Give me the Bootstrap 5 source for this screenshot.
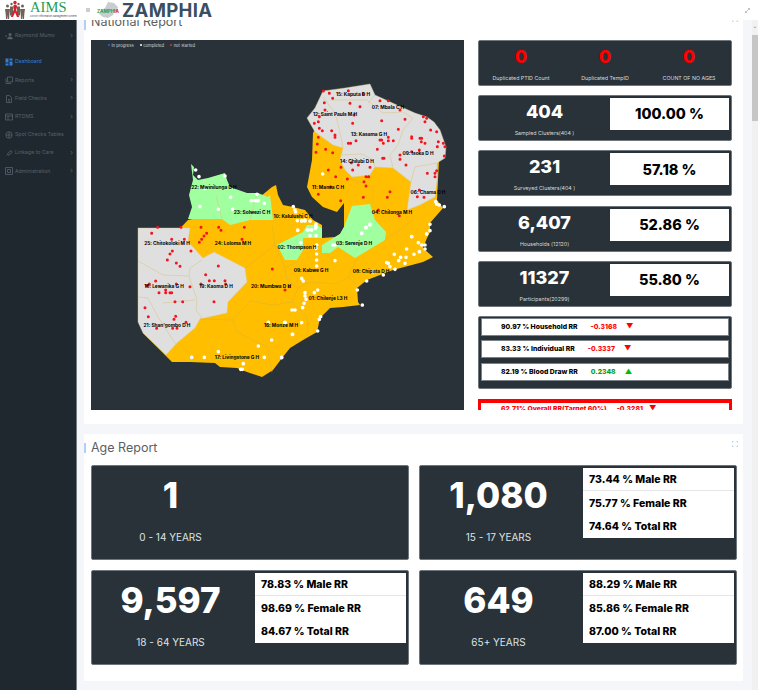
<!DOCTYPE html>
<html lang="en">

<head>
    <meta charset="UTF-8">
    <meta name="viewport" content="width=device-width, initial-scale=1.0">
    <title>ZAMPHIA - Dashboard</title>
    <link href="https://cdn.jsdelivr.net/npm/bootstrap@5.3.0/dist/css/bootstrap.min.css" rel="stylesheet">
    <style>
        html, body { height: 690px; overflow: hidden; }
        body { font-family: Inter, "Liberation Sans", sans-serif; background: #f4f6f9; color: #000; }

        /* top bar */
        .top-bar { height: 20px; background: #fff; position: relative; z-index: 2; }
        .aims-block { width: 44px; flex: none; }
        .aims-word { font-family: "Liberation Serif", serif; font-size: 14.5px; line-height: 13px; color: #1f9d55; letter-spacing: .1px; }
        .aims-sub { font-size: 2.4px; line-height: 4px; margin-top: 1px; color: #444; white-space: nowrap; }
        .burger { width: 4px; height: 4px; background: #c9ced3; margin-left: 12px; margin-right: 6px; flex: none; }
        .zam-logo { width: 24px; height: 18px; flex: none; }
        .zam-title { font-size: 18.5px; line-height: 20px; font-weight: 700; color: #3a4f5f; margin-left: 2px; letter-spacing: .3px; }

        /* side menu */
        .page-body { height: 670px; }
        .side-menu { width: 77px; flex: none; background: #20282f; border-right: 1px solid #737b85; padding-top: 7px; }
        .menu-item { height: 18.2px; padding-left: 5px; padding-right: 3px; font-size: 5.2px; color: #56616c; white-space: nowrap; }
        .menu-item svg { width: 8px; height: 8px; margin-right: 2px; flex: none; }
        .menu-item.is-first { margin-bottom: 8px; }
        .menu-item.is-active { color: #2f7fd8; }
        .menu-caret { margin-left: auto; font-size: 7px; }

        /* cards */
        .main-area { width: 675px; flex: none; padding: 0 9px 0 7px; overflow: hidden; }
        .report-card { background: #fff; padding-left: 7px; padding-right: 6px; position: relative; }
        .report-first { margin-top: -10px; height: 414px; padding-top: 5px; margin-bottom: 10px; }
        .report-second { height: 247px; padding-top: 7px; }
        .report-title { font-size: 12.5px; line-height: 14px; color: #5a5f63; font-weight: 400; margin: 0 0 11px; }
        .report-second .report-title { margin-bottom: 10px; }
        .title-mark { position: absolute; left: 0; width: 2px; height: 10px; background: #b3cff5; }
        .expand-icon { position: absolute; right: 5px; width: 6px; height: 6px; }

        .map-panel { width: 373px; height: 370px; flex: none; background: #283238; position: relative; }
        .map-panel svg { display: block; width: 373px; height: 370px; }
        .map-legend { position: absolute; left: 17px; top: 3px; font-size: 4.2px; color: #cfd4d8; }
        .map-legend i { display: inline-block; width: 2px; height: 2px; border-radius: 50%; margin-right: 1.500px; vertical-align: 1px; }
        .map-legend span { margin-right: 6px; }
        .map-name { font-family: Inter, sans-serif; font-size: 4.8px; font-weight: 700; fill: #000; text-anchor: middle; }
        .map-border { fill: none; stroke: #d8c88e; stroke-width: .6; }
        .map-border-soft { fill: none; stroke: #e3b12c; stroke-width: .6; }
        .red-dots { fill: none; stroke: #f5141e; stroke-width: 9; stroke-linecap: round; }
        .white-dots { fill: none; stroke: #fff; stroke-width: 11; stroke-linecap: round; }

        .stat-col { width: 254px; height: 370px; margin-left: 14px; overflow: hidden; flex: none; }
        .stat-box { background: #283238; border: 1px solid #6d767c; border-radius: 2px; color: #fff; }
        .stat-small { height: 46px; margin-bottom: 9.2px; }
        .stat-head { font-size: 18px; line-height: 24px; font-weight: 800; padding-top: 4px; }
        .stat-label { font-size: 5.3px; line-height: 8px; margin-top: 5px; color: #d7dbde; white-space: nowrap; }
        .stat-red { color: #f00; }
        .stat-pct { width: 119px; height: 32px; margin: 2px 2px 0 0; background: #fff; color: #000; font-size: 14.5px; font-weight: 800; flex: none; }
        .rr-box { height: 73px; margin-bottom: 10px; padding: 1px 2px; }
        .rr-line { height: 18px; background: #fff; border: 1px solid #7a8288; margin-bottom: 4.5px; padding-left: 19px; font-size: 6.8px; font-weight: 800; color: #000; gap: 13px; white-space: nowrap; }
        .rr-down { color: #f00; }
        .rr-up { color: #0a9a0a; }
        .rr-arrow { font-size: 7px; margin-left: -4px; }
        .rr-arrow.rr-up { color: #00c000; }
        .rr-alert { border: 3px solid #f00; border-top-width: 4px; border-bottom: 0; height: 40px; background: #fff; padding: 1.500px 0 0 20px; font-size: 6.8px; font-weight: 800; color: #f00; gap: 10px; white-space: nowrap; }

        .age-grid { display: grid; grid-template-columns: 318px 318px; gap: 10px; }
        .age-box { height: 95px; background: #283238; border: 1px solid #6d767c; border-radius: 2px; color: #fff; }
        .age-side { flex: 1 1 0; min-width: 0; padding-top: 7px; }
        .age-count { font-size: 35px; line-height: 44px; font-weight: 800; }
        .age-label { font-size: 10px; line-height: 14px; margin-top: 13px; color: #dfe2e4; }
        .age-list { width: 151px; height: 70px; margin: 2px 2px 0 6px; background: #fff; color: #000; font-size: 10.5px; font-weight: 800; flex: none; white-space: nowrap; }
        .age-list div { height: 23.3px; padding: 2px 0 0 6px; }
        .age-list div:first-child { border-bottom: 1px solid #e4e6e8; }

        /* fake scrollbar */
        .scroll-track { width: 6px; flex: none; background: #f1f1f1; font-size: 4px; line-height: 15px; color: #555; text-align: center; }
        .scroll-thumb { height: 86px; background: #c6c6c6; }
    </style>
</head>

<body>

    <header class="top-bar d-flex align-items-center">
        <svg width="22" height="20" viewBox="0 0 22 20" class="ms-1 flex-none">
            <g fill="#6f6258">
                <circle cx="3.5" cy="6" r="1.5"/><path d="M1 9h5l-.6 5-.3 5H3.8l-.3-4-.3 4H2l-.3-5z"/>
                <circle cx="18.5" cy="6" r="1.5"/><path d="M16 9h5l-.7 5-.3 5h-1.2l-.3-4-.3 4H17l-.3-5z"/>
                <circle cx="7.5" cy="4" r="1.2"/><circle cx="14.5" cy="4" r="1.2"/>
                <path d="M6 6.500h3v9H6zM13 6.500h3v9h-3z"/>
            </g>
            <circle cx="11" cy="2.500" r="1.700" fill="#d6202a"/>
            <path d="M11 4.500c2 0 2.500 2 1.700 4L9 17H6.800l3-7.400c-.8-1.800-.8-5.100 1.200-5.100zM10.200 10.500l1.400-1.800 3.600 8.300H13z" fill="#d6202a"/>
        </svg>
        <div class="aims-block ms-1">
            <div class="aims-word">AIMS</div>
            <div class="aims-sub">Activity Information Management System</div>
        </div>
        <div class="burger"></div>
        <svg class="zam-logo" viewBox="0 0 24 18">
            <path d="M12 1l6 1 4 4-1 4-3 1-1 3-5 3-5-1-4-3 2-4 4-2z" fill="#c9cdcf"/>
            <text x="1" y="12" font-size="4.600" font-weight="700" fill="#1f9d55" font-family="Inter, sans-serif">ZAMPH<tspan fill="#d6202a">IA</tspan></text>
        </svg>
        <div class="zam-title">ZAMPHIA</div>
        <svg class="ms-auto me-2" width="5" height="5" viewBox="0 0 5 5"><path d="M.5 4.500l4-4M3 .5h1.500V2M.5 3v1.500H2" fill="none" stroke="#9aa0a5" stroke-width=".6"/></svg>
    </header>

    <div class="page-body d-flex">
        <aside class="side-menu">
            <div class="menu-item is-first d-flex align-items-center">
                <svg viewBox="0 0 8 8"><circle cx="5" cy="2.500" r="1.500" fill="#56616c"/><path d="M2.500 7c0-3 5-3 5 0zM0 4h2M1 3v2" fill="#56616c" stroke="#56616c" stroke-width=".5"/></svg>Raymond Mumo<span class="menu-caret">›</span>
            </div>
            <div class="menu-item is-active d-flex align-items-center">
                <svg viewBox="0 0 8 8" fill="#2f7fd8"><path d="M.5.500h3v4h-3zM4.500.500h3v2h-3zM.5 5.500h3v2h-3zM4.500 3.500h3v4h-3z"/></svg>Dashboard
            </div>
            <div class="menu-item d-flex align-items-center">
                <svg viewBox="0 0 8 8" fill="none" stroke="#56616c" stroke-width=".8"><path d="M2.500 1h5v5h-5zM1 2.500V7.500h5"/></svg>Reports<span class="menu-caret">›</span>
            </div>
            <div class="menu-item d-flex align-items-center">
                <svg viewBox="0 0 8 8" fill="none" stroke="#56616c" stroke-width=".8"><path d="M1.500.500h3l2 2v5h-5zM3 4.500h2M3 6h2"/></svg>Field Checks<span class="menu-caret">›</span>
            </div>
            <div class="menu-item d-flex align-items-center">
                <svg viewBox="0 0 8 8" fill="none" stroke="#56616c" stroke-width=".8"><path d="M.5 1h7v6h-7zM.5 3h7M3 3v4"/></svg>RTDMS<span class="menu-caret">›</span>
            </div>
            <div class="menu-item d-flex align-items-center">
                <svg viewBox="0 0 8 8" fill="none" stroke="#56616c" stroke-width=".8"><circle cx="4" cy="4" r="3.200"/><path d="M1 4h6M4 1v6"/></svg>Spot Checks Tables
            </div>
            <div class="menu-item d-flex align-items-center">
                <svg viewBox="0 0 8 8" fill="none" stroke="#56616c" stroke-width=".9"><path d="M1.500 6.500l1-1M3 4.200l2-2c1-1 2.500.4 1.500 1.500l-2 2c-1 1-2.600-.4-1.500-1.500z"/></svg>Linkage to Care<span class="menu-caret">›</span>
            </div>
            <div class="menu-item d-flex align-items-center">
                <svg viewBox="0 0 8 8" fill="none" stroke="#56616c" stroke-width=".8"><path d="M.5.500h7v7h-7zM2.500 2.500h3v3h-3z"/></svg>Administration<span class="menu-caret">›</span>
            </div>
        </aside>

        <main class="main-area">
            <section class="report-card report-first">
                <span class="title-mark" style="top: 10px"></span>
                <svg class="expand-icon" style="top: 6px" viewBox="0 0 6 6"><path d="M0 2V0h2M4 0h2v2M6 4v2H4M2 6H0V4" fill="none" stroke="#9fc1f5" stroke-width=".8"/></svg>
                <h5 class="report-title">National Report</h5>
                <div class="d-flex">
                    <div class="map-panel">
                        <div class="map-legend">
                            <span><i class="bg-primary"></i>in progress</span><span><i class="bg-white"></i>completed</span><span><i class="bg-danger"></i>not started</span>
                        </div>
                        <svg viewBox="91 40 373 370">
                            <!-- country base -->
                            <path fill="#ffbf00" d="M188 220L250 205L272 187L276 185L278 195L283 205L293 207L305 210L313 220L322 225L322 238L335 237L340 234L344 227L344 203L337 212L323 207L312 197L307 187L312 160L313 133L330 100L420 120L440 140L437 200L443 208L430 223L430 232L427 238L423 248L433 257L423 262L393 270L367 280L357 288L358 302L360 305L343 307L330 308L320 318L317 332L303 340L290 348L282 358L273 370L262 377L247 372L237 368L220 367L215 363L190 362L172 362L166 356L143 333L150 260Z"/>
                            <!-- north -->
                            <path fill="#dfdfdf" stroke="#d8c88e" stroke-width=".4" d="M323 91L345 88L370 84L375 95L397 105L415 113L427 117L434 122L440 130L446 147L445 158L437 163L437 180L435 197L420 205L407 210L411 182L393 168L375 167L370 175L352 177L345 170L340 160L343 148L333 145L315 132L307 118L315 108Z"/>
                            <!-- west -->
                            <path fill="#dfdfdf" stroke="#d8c88e" stroke-width=".4" d="M138 228L190 228L188 242L193 247L203 258L214 252L245 268L247 282L228 302L227 313L200 319L195 328L177 343L166 355L143 333L138 322Z"/>
                            <!-- green provinces -->
                            <path fill="#a0ff9f" d="M191 164L194 167L193 175L198 180L208 178L225 173L227 180L230 187L247 193L258 193L268 197L270 195L273 220L250 220L230 225L222 219L188 219L192 207L189 195L193 180Z"/>
                            <path fill="#a0ff9f" d="M277 245L303 232L307 225L317 225L322 228L322 238L303 238L303 250L297 260L285 260Z"/>
                            <path fill="#a0ff9f" d="M322 245L340 234L344 227L352 206L370 204L375 220L386 232L385 240L355 258L338 247L330 253L322 253Z"/>
                            <!-- district lines -->
                            <path class="map-border" d="M323 97L335 113L340 132L343 148M332 100L367 100L383 113L403 112L413 118L403 130L398 145L390 155L393 168M375 95L368 103M340 155L362 154L373 160L375 167M415 167L437 163M411 182L415 167"/>
                            <path class="map-border" d="M138 261L163 275L189 276L190 268L202 260M189 276L197 300L196 310L202 318M138 297L148 298L158 317L177 346M163 303L195 300"/>
                            <path class="map-border" d="M216 195L222 219M257 193L250 220"/>
                            <path class="map-border-soft" d="M345 177L373 187L373 200M413 220L385 240M272 225L275 245L245 268M275 245L285 268L287 280L298 288L292 302L272 305L250 301L233 320L200 319M233 320L237 332L267 347L272 372M292 302L307 317L308 332L303 340M298 288L310 282L337 284L348 277L357 258M348 277L357 285M285 268L297 262"/>
                            <!-- not started sites -->
                            <path class="red-dots" transform="translate(280 80) scale(.3333)" d="M130 33h0M148 40h0M205 32h0M158 55h0M250 42h0M133 68h0M135 90h0M210 70h0M300 62h0M325 62h0M240 80h0M360 90h0M118 110h0M115 125h0M222 105h0M103 130h0M218 130h0M118 145h0M127 152h0M155 152h0M165 165h0M165 172h0M305 122h0M355 148h0M375 118h0M430 110h0M440 115h0M435 125h0M452 150h0M395 170h0M395 175h0M470 155h0M420 175h0M425 175h0M424 185h0M435 190h0M418 210h0M395 215h0M360 225h0M360 238h0M378 255h0M475 185h0M490 190h0M495 200h0M493 228h0M472 200h0M205 190h0M212 190h0M228 182h0M300 180h0M305 180h0M310 190h0M325 182h0M325 172h0M340 182h0M292 208h0M308 235h0M312 235h0M235 255h0M270 262h0M214 248h0M183 262h0M115 172h0M112 192h0M108 217h0M137 208h0M158 218h0M145 270h0M167 290h0M202 297h0M258 290h0M266 290h0M252 305h0M258 318h0M250 352h0M322 352h0M330 335h0M295 390h0M358 407h0M218 270h0M115 343h0M182 362h0M152 320h0M470 272h0M465 280h0M465 290h0M442 280h0M418 330h0M432 352h0M412 350h0"/>
                            <path class="red-dots" transform="translate(130 220) scale(.3333)" d="M83 22h0M153 22h0M65 40h0M125 58h0M163 58h0M183 93h0M127 93h0M120 102h0M112 120h0M139 129h0M150 139h0M77 183h0M58 192h0M50 197h0M139 192h0M180 200h0M107 210h0M87 218h0M107 218h0M120 218h0M125 218h0M135 245h0M158 245h0M45 263h0M55 290h0M137 289h0M132 298h0M168 307h0M80 325h0M128 325h0M141 325h0M265 138h0M227 164h0M238 182h0M253 182h0M285 182h0M213 192h0M287 192h0M252 245h0M213 22h0M266 22h0M273 31h0M343 22h0M230 40h0M222 48h0M215 58h0M208 67h0M336 58h0M427 147h0M465 210h0M478 200h0"/>
                            <!-- completed sites -->
                            <path class="white-dots" transform="translate(130 80) scale(.3333)" d="M197 270h0M207 290h0M285 288h0M225 325h0M302 352h0M210 380h0M265 388h0M308 388h0M364 362h0M375 362h0M380 362h0M385 362h0M381 343h0M403 370h0M490 380h0M495 390h0M497 396h0M503 451h0"/>
                            <path class="white-dots" transform="translate(280 80) scale(.3333)" d="M52 422h0M65 422h0M75 420h0M107 435h0M107 445h0M85 450h0M95 450h0M128 282h0M258 443h0M270 435h0M245 460h0M395 470h0M440 462h0M450 433h0M470 372h0M478 375h0M493 380h0M467 365h0"/>
                            <path class="white-dots" transform="translate(280 220) scale(.3333)" d="M65 3h0M75 3h0M90 3h0M108 12h0M108 20h0M53 30h0M82 30h0M95 30h0M90 47h0M108 47h0M63 68h0M110 75h0M108 85h0M110 102h0M110 120h0M110 138h0M165 122h0M158 75h0M165 75h0M245 40h0M258 22h0M270 12h0M395 50h0M440 42h0M450 32h0M415 68h0M425 75h0M435 75h0M435 87h0M343 103h0M362 112h0M380 87h0M378 112h0M402 103h0M418 95h0M320 128h0M325 130h0M356 122h0M330 140h0M375 130h0M345 148h0M280 155h0M310 165h0M260 183h0M232 210h0M247 255h0M65 175h0M70 183h0M113 210h0M103 218h0M75 218h0M75 228h0M78 238h0M72 250h0M68 263h0M36 270h0M45 270h0M15 308h0M65 308h0M122 290h0M118 298h0M113 333h0M38 343h0M5 413h0"/>
                            <path class="white-dots" transform="translate(130 220) scale(.3333)" d="M415 307h0M465 307h0M487 343h0M425 360h0M385 378h0M265 395h0M185 412h0M223 412h0M403 412h0M455 412h0M340 431h0M337 448h0M332 448h0"/>
                            <!-- district names -->
                            <text class="map-name" x="353" y="96">15: Kaputa D H</text>
                            <text class="map-name" x="388" y="109">07: Mbala C H</text>
                            <text class="map-name" x="335" y="116">12: Saint Pauls M H</text>
                            <text class="map-name" x="369" y="136">13: Kasama G H</text>
                            <text class="map-name" x="418" y="155">09: Isoka D H</text>
                            <text class="map-name" x="357" y="163">14: Chilubi D H</text>
                            <text class="map-name" x="428" y="194">06: Chama D H</text>
                            <text class="map-name" x="328" y="189">11: Mansa C H</text>
                            <text class="map-name" x="214" y="189">22: Mwinilunga D H</text>
                            <text class="map-name" x="252" y="214">23: Solwezi C H</text>
                            <text class="map-name" x="293" y="218">10: Kalulushi C H</text>
                            <text class="map-name" x="392" y="214">04: Chilonga M H</text>
                            <text class="map-name" x="167" y="245">25: Chitokoloki M H</text>
                            <text class="map-name" x="233" y="245">24: Loloma M H</text>
                            <text class="map-name" x="297" y="249">02: Thompson H</text>
                            <text class="map-name" x="354" y="245">03: Serenje D H</text>
                            <text class="map-name" x="311" y="272">09: Kabwe G H</text>
                            <text class="map-name" x="371" y="273">08: Chipata D H</text>
                            <text class="map-name" x="164" y="288">18: Lewanika G H</text>
                            <text class="map-name" x="216" y="288">19: Kaoma D H</text>
                            <text class="map-name" x="271" y="288">20: Mumbwa D H</text>
                            <text class="map-name" x="328" y="300">01: Chilenje L3 H</text>
                            <text class="map-name" x="167" y="327">21: Shan'gombo D H</text>
                            <text class="map-name" x="281" y="327">16: Monze M H</text>
                            <text class="map-name" x="237" y="359">17: Livingstone G H</text>
                        </svg>
                    </div>

                    <div class="stat-col">
                        <div class="stat-box stat-small d-flex text-center">
                            <div class="flex-fill w-25"><div class="stat-head stat-red">0</div><div class="stat-label">Duplicated PTID Count</div></div>
                            <div class="flex-fill w-25"><div class="stat-head stat-red">0</div><div class="stat-label">Duplicated TempID</div></div>
                            <div class="flex-fill w-25"><div class="stat-head stat-red">0</div><div class="stat-label">COUNT OF NO AGES</div></div>
                        </div>
                        <div class="stat-box stat-small d-flex text-center">
                            <div class="flex-fill"><div class="stat-head">404</div><div class="stat-label">Sampled Clusters(404 )</div></div>
                            <div class="stat-pct d-flex align-items-center justify-content-center">100.00 %</div>
                        </div>
                        <div class="stat-box stat-small d-flex text-center">
                            <div class="flex-fill"><div class="stat-head">231</div><div class="stat-label">Surveyed Clusters(404 )</div></div>
                            <div class="stat-pct d-flex align-items-center justify-content-center">57.18 %</div>
                        </div>
                        <div class="stat-box stat-small d-flex text-center">
                            <div class="flex-fill"><div class="stat-head">6,407</div><div class="stat-label">Households (12120)</div></div>
                            <div class="stat-pct d-flex align-items-center justify-content-center">52.86 %</div>
                        </div>
                        <div class="stat-box stat-small d-flex text-center">
                            <div class="flex-fill"><div class="stat-head">11327</div><div class="stat-label">Participants(20299)</div></div>
                            <div class="stat-pct d-flex align-items-center justify-content-center">55.80 %</div>
                        </div>
                        <div class="stat-box rr-box">
                            <div class="rr-line d-flex align-items-center"><span>90.97 % Household RR</span><span class="rr-down">-0.3168</span><span class="rr-arrow rr-down">▼</span></div>
                            <div class="rr-line d-flex align-items-center"><span>83.33 % Individual RR</span><span class="rr-down">-0.3337</span><span class="rr-arrow rr-down">▼</span></div>
                            <div class="rr-line d-flex align-items-center"><span>82.19 % Blood Draw RR</span><span class="rr-up">0.2348</span><span class="rr-arrow rr-up">▲</span></div>
                        </div>
                        <div class="rr-alert d-flex align-items-start"><span>62.71% Overall RR(Target 60%)</span><span>-0.3281</span><span class="rr-arrow">▼</span></div>
                    </div>
                </div>
            </section>

            <section class="report-card report-second">
                <span class="title-mark" style="top: 9px"></span>
                <svg class="expand-icon" style="top: 7px" viewBox="0 0 6 6"><path d="M0 2V0h2M4 0h2v2M6 4v2H4M2 6H0V4" fill="none" stroke="#9fc1f5" stroke-width=".8"/></svg>
                <h5 class="report-title">Age Report</h5>
                <div class="age-grid">
                    <div class="age-box d-flex text-center">
                        <div class="age-side"><div class="age-count">1</div><div class="age-label">0 - 14 YEARS</div></div>
                        <div class="age-list invisible"></div>
                    </div>
                    <div class="age-box d-flex text-center">
                        <div class="age-side"><div class="age-count">1,080</div><div class="age-label">15 - 17 YEARS</div></div>
                        <div class="age-list text-start">
                            <div class="d-flex align-items-center">73.44 % Male RR</div>
                            <div class="d-flex align-items-center">75.77 % Female RR</div>
                            <div class="d-flex align-items-center">74.64 % Total RR</div>
                        </div>
                    </div>
                    <div class="age-box d-flex text-center">
                        <div class="age-side"><div class="age-count">9,597</div><div class="age-label">18 - 64 YEARS</div></div>
                        <div class="age-list text-start">
                            <div class="d-flex align-items-center">78.83 % Male RR</div>
                            <div class="d-flex align-items-center">98.69 % Female RR</div>
                            <div class="d-flex align-items-center">84.67 % Total RR</div>
                        </div>
                    </div>
                    <div class="age-box d-flex text-center">
                        <div class="age-side"><div class="age-count">649</div><div class="age-label">65+ YEARS</div></div>
                        <div class="age-list text-start">
                            <div class="d-flex align-items-center">88.29 % Male RR</div>
                            <div class="d-flex align-items-center">85.86 % Female RR</div>
                            <div class="d-flex align-items-center">87.00 % Total RR</div>
                        </div>
                    </div>
                </div>
            </section>
        </main>

        <div class="scroll-track">
            ˄
            <div class="scroll-thumb"></div>
        </div>
    </div>

    <script src="https://cdn.jsdelivr.net/npm/bootstrap@5.3.0/dist/js/bootstrap.bundle.min.js"></script>
</body>

</html>
